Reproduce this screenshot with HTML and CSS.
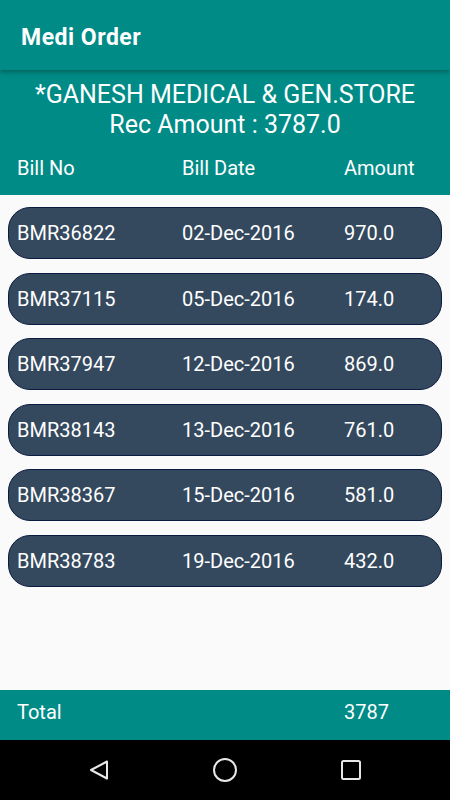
FILE: index.html
```html
<!DOCTYPE html>
<html lang="en">
<head>
  <meta charset="UTF-8" />
  <title>Medi Order</title>
  <link rel="stylesheet" href="styles.css">
</head>
<body>
  <header class="appbar">
    <h1>Medi Order</h1>
  </header>

  <section class="summary">
    <div class="store">*GANESH MEDICAL &amp; GEN.STORE</div>
    <div class="rec">Rec Amount : 3787.0</div>
    <div class="cols head">
      <span>Bill No</span>
      <span>Bill Date</span>
      <span>Amount</span>
    </div>
  </section>

  <main class="list">
    <div class="cols bill"><span>BMR36822</span><span>02-Dec-2016</span><span>970.0</span></div>
    <div class="cols bill"><span>BMR37115</span><span>05-Dec-2016</span><span>174.0</span></div>
    <div class="cols bill"><span>BMR37947</span><span>12-Dec-2016</span><span>869.0</span></div>
    <div class="cols bill"><span>BMR38143</span><span>13-Dec-2016</span><span>761.0</span></div>
    <div class="cols bill"><span>BMR38367</span><span>15-Dec-2016</span><span>581.0</span></div>
    <div class="cols bill"><span>BMR38783</span><span>19-Dec-2016</span><span>432.0</span></div>
  </main>

  <footer class="cols total">
    <span>Total</span>
    <span></span>
    <span>3787</span>
  </footer>

  <nav class="navbar">
    <svg width="24" height="24" viewBox="0 0 24 24"><path d="M20 3.5 L4 12 L20 20.5 Z" fill="none" stroke="#e8e8e8" stroke-width="2" stroke-linejoin="round"/></svg>
    <svg width="26" height="26" viewBox="0 0 26 26"><circle cx="13" cy="13" r="11" fill="none" stroke="#e8e8e8" stroke-width="2"/></svg>
    <svg width="24" height="24" viewBox="0 0 24 24"><rect x="3" y="3" width="18" height="18" rx="1.5" fill="none" stroke="#e8e8e8" stroke-width="2"/></svg>
  </nav>
</body>
</html>
```

FILE: styles.css
```css
* { box-sizing: border-box; }
html, body { margin: 0; height: 100%; }
body {
  font-family: Roboto, "Noto Sans", sans-serif;
  background: #fafafa;
  color: #fff;
  display: flex;
  flex-direction: column;
  height: 800px;
}

.appbar {
  height: 70px; flex: none;
  background: #008b87;
  display: flex; align-items: center;
  padding: 4px 21px 0;
  box-shadow: 0 2px 5px rgba(0,0,0,0.3);
  position: relative; z-index: 1;
}
.appbar h1 { margin: 0; font-size: 23px; font-weight: 700; letter-spacing: 0.5px; }

.summary {
  height: 125px; flex: none;
  background: #008b87;
  text-align: center;
  padding-top: 10px;
}
.store, .rec { font-size: 25px; line-height: 29.5px; }

.cols {
  display: grid;
  grid-template-columns: 165px 162px 1fr;
  text-align: left;
  font-size: 20px;
}
.head { padding: 17px 0 0 17px; }

.list {
  flex: 1;
  padding: 12px 8px;
  display: flex; flex-direction: column;
  gap: 13.6px;
}
.bill {
  height: 52px;
  align-items: center;
  padding-left: 8px;
  background: #34495e;
  border: 1px solid #0b1a40;
  border-radius: 22px;
}

.total {
  height: 50px; flex: none;
  background: #008b87;
  align-items: center;
  padding: 0 0 6px 17px;
}

.navbar {
  height: 60px; flex: none;
  background: #000;
  display: flex; justify-content: center; align-items: center;
  gap: 101px;
}
```
